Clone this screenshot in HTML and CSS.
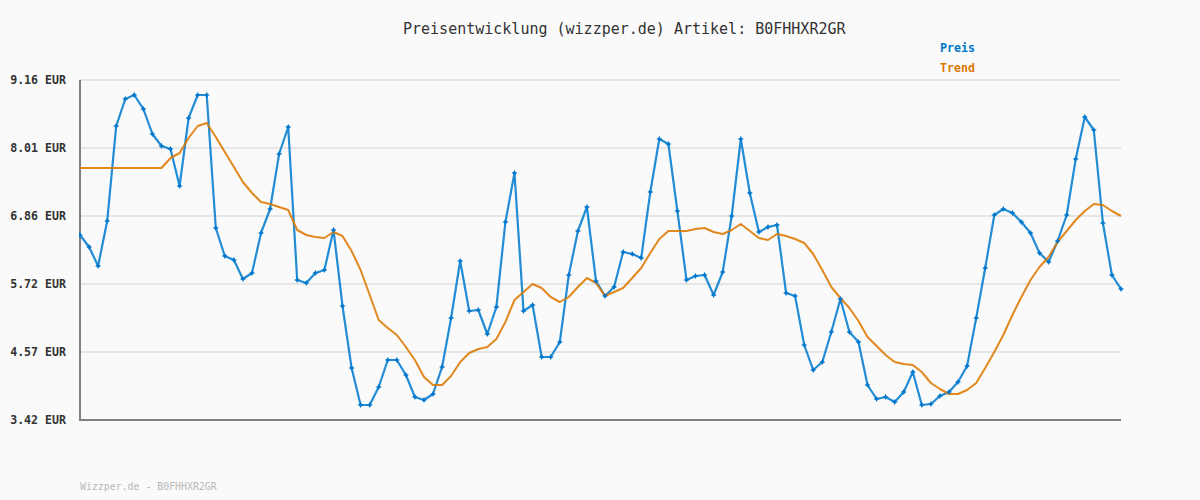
FILE: index.html
```html
<!DOCTYPE html>
<html lang="de">
<head>
<meta charset="utf-8">
<title>Preisentwicklung</title>
<link rel="stylesheet" href="styles.css">
</head>
<body>
<main class="page">
  <h1 class="title">Preisentwicklung (wizzper.de) Artikel: B0FHHXR2GR</h1>
  <ul class="legend">
    <li class="legend-price">Preis</li>
    <li class="legend-trend">Trend</li>
  </ul>
  <div class="chart">
    <div class="y-axis">
      <span>9.16 EUR</span>
      <span>8.01 EUR</span>
      <span>6.86 EUR</span>
      <span>5.72 EUR</span>
      <span>4.57 EUR</span>
      <span>3.42 EUR</span>
    </div>
    <svg class="plot" width="1046" height="354" viewBox="79 73 1046 354" xmlns="http://www.w3.org/2000/svg">
      <defs>
        <marker id="dot" markerUnits="userSpaceOnUse" markerWidth="7" markerHeight="7" refX="3.5" refY="3.5" viewBox="0 0 7 7">
          <path class="dot" d="M3.5 .4 4.6 2.4 6.6 3.5 4.6 4.6 3.5 6.6 2.4 4.6 .4 3.5 2.4 2.4Z"/>
        </marker>
        <polyline id="price-points" points="80,235 89.1,247 98.1,266 107.2,221 116.2,126 125.3,99 134.3,95 143.4,109 152.4,134 161.5,146 170.5,149 179.6,186 188.6,118 197.7,95 206.7,95 215.8,228 224.8,256 233.9,260 242.9,279 252,273 261,233 270.1,209 279.1,154 288.2,127 297.2,280 306.3,283 315.4,273 324.4,270 333.5,230 342.5,306 351.6,368 360.6,405 369.7,405 378.7,387 387.8,360 396.8,360 405.9,375 414.9,397 424,400 433,394 442.1,367 451.1,318 460.2,261 469.2,311 478.3,310 487.3,334 496.4,307 505.4,222 514.5,173 523.5,311 532.6,305 541.7,357 550.7,357 559.8,342 568.8,275 577.9,231 586.9,207 596,281 605,296 614.1,287 623.1,252 632.2,254 641.2,258 650.3,192 659.3,139 668.4,144 677.4,211 686.5,280 695.5,276 704.6,275 713.6,295 722.7,272 731.7,216 740.8,139 749.8,193 758.9,232 768,227 777,225 786.1,293 795.1,296 804.2,345 813.2,370 822.3,362 831.3,332 840.4,299 849.4,332 858.5,342 867.5,385 876.6,399 885.6,397 894.7,402 903.7,392 912.8,372 921.8,405 930.9,404 939.9,396 949,392 958,382 967.1,366 976.2,318 985.2,268 994.3,215 1003.3,209 1012.4,213 1021.4,222 1030.5,233 1039.5,253 1048.6,262 1057.6,241 1066.7,215 1075.7,159 1084.8,117 1093.8,130 1102.9,223 1111.9,275 1121,289"/>
      </defs>
      <g class="grid">
        <line x1="80" x2="1121" y1="80" y2="80"/>
        <line x1="80" x2="1121" y1="148" y2="148"/>
        <line x1="80" x2="1121" y1="216" y2="216"/>
        <line x1="80" x2="1121" y1="284" y2="284"/>
        <line x1="80" x2="1121" y1="352" y2="352"/>
      </g>
      <path class="axis" d="M80 80V420H1121"/>
      <use class="price" href="#price-points"/>
      <polyline class="trend" points="80,168 89.1,168 98.1,168 107.2,168 116.2,168 125.3,168 134.3,168 143.4,168 152.4,168 161.5,168 170.5,158 179.6,153 188.6,138 197.7,126 206.7,123 215.8,137 224.8,152 233.9,167 242.9,182 252,193 261,202 270.1,204 279.1,207 288.2,210 297.2,230 306.3,235 315.4,237 324.4,238 333.5,232 342.5,236 351.6,251 360.6,270 369.7,295 378.7,320 387.8,328 396.8,335 405.9,347 414.9,360 424,377 433,385 442.1,385 451.1,376 460.2,362 469.2,353 478.3,349 487.3,347 496.4,339 505.4,322 514.5,300 523.5,292 532.6,284 541.7,288 550.7,297 559.8,302 568.8,297 577.9,287 586.9,278 596,283 605,296 614.1,292 623.1,288 632.2,278 641.2,268 650.3,253 659.3,239 668.4,231 677.4,231 686.5,231 695.5,229 704.6,228 713.6,232 722.7,234 731.7,230 740.8,224 749.8,231 758.9,238 768,240 777,234 786.1,236 795.1,239 804.2,243 813.2,254 822.3,270 831.3,287 840.4,298 849.4,308 858.5,321 867.5,337 876.6,346 885.6,355 894.7,362 903.7,364 912.8,365 921.8,372 930.9,383 939.9,389 949,394 958,394 967.1,390 976.2,383 985.2,368 994.3,352 1003.3,335 1012.4,315 1021.4,297 1030.5,280 1039.5,267 1048.6,257 1057.6,242 1066.7,231 1075.7,220 1084.8,211 1093.8,204 1102.9,205 1111.9,211 1121,216"/>
      <use class="price-dots" href="#price-points" marker-start="url(#dot)" marker-mid="url(#dot)" marker-end="url(#dot)"/>
    </svg>
  </div>
  <footer class="footer">Wizzper.de - B0FHHXR2GR</footer>
</main>
</body>
</html>
```
FILE: styles.css
```css
* {
  box-sizing: border-box;
}

html,
body {
  margin: 0;
  padding: 0;
}

body {
  background: #fafafa;
  font-family: "DejaVu Sans Mono", "Liberation Mono", monospace;
}

.page {
  width: 1200px;
  height: 500px;
  overflow: hidden;
  padding-top: 21px;
}

.title {
  margin: 0;
  padding-left: 403px;
  height: 16px;
  font-size: 15px;
  line-height: 16px;
  font-weight: normal;
  color: #333333;
}

.legend {
  list-style: none;
  height: 32px;
  margin: 4px 0 0;
  padding: 0 0 0 940px;
  display: flex;
  flex-direction: column;
  gap: 6px;
  font-size: 11.6px;
  line-height: 14px;
  font-weight: bold;
}

.legend-price {
  color: #0077cc;
}

.legend-trend {
  color: #dd7700;
}

.chart {
  display: flex;
  height: 354px;
}

.y-axis {
  width: 79px;
  padding-right: 13px;
  display: flex;
  flex-direction: column;
  justify-content: space-between;
  text-align: right;
  font-size: 11.6px;
  line-height: 14px;
  font-weight: bold;
  color: #333333;
}

.plot {
  display: block;
}

.grid line {
  stroke: #e6e6e6;
  stroke-width: 2;
}

.axis {
  fill: none;
  stroke: #808080;
  stroke-width: 2;
}

.price,
.trend,
.price-dots {
  fill: none;
  stroke-linejoin: round;
}

.price {
  stroke: #0a80d0;
  stroke-width: 2.2;
  stroke-opacity: 0.9;
}

.trend {
  stroke: #dd7700;
  stroke-width: 2;
  stroke-opacity: 0.88;
}

.dot {
  fill: #0077cc;
}

.footer {
  margin-top: 53px;
  padding-left: 80px;
  font-size: 9.9px;
  line-height: 14px;
  color: #b8b8b8;
}
```
